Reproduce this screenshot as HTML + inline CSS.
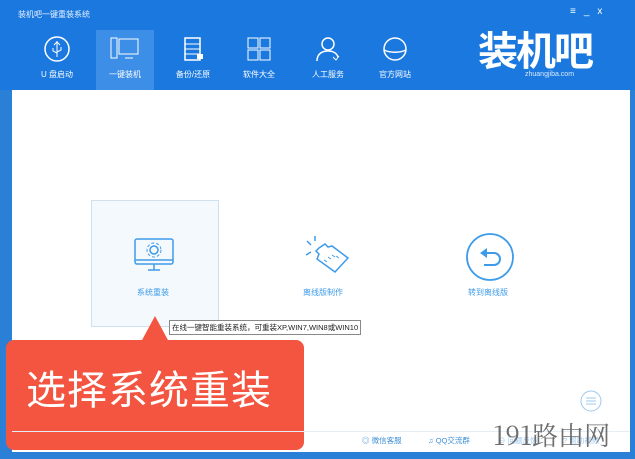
<!DOCTYPE html><html><head><meta charset="utf-8"><style>
*{margin:0;padding:0;box-sizing:border-box}
body{width:635px;height:459px;overflow:hidden;background:#2a7fd6;font-family:"Liberation Sans","Noto Sans CJK SC",sans-serif;position:relative}
.hdr{position:absolute;left:0;top:0;width:635px;height:90px;background:#1a78df}
.t{position:absolute;left:18px;top:9px;color:#e8f2ff;font-size:8px}
.win{position:absolute;left:12px;top:90px;width:618px;height:362px;background:#fff}
.nav{position:absolute;top:30px;width:58px;height:60px;text-align:center;color:#fff;font-size:8px}
.nav.sel{background:#3c8ee6}
.nav svg{display:block;margin:5px auto 6px}
.logo{position:absolute;left:478px;top:24px;color:#fff;font-size:40px;font-weight:bold;letter-spacing:-2px;font-family:"Noto Sans CJK SC",sans-serif;line-height:48px}
.lsub{position:absolute;left:525px;top:71px;color:#d8ebff;font-size:7px}
.box{position:absolute;left:91px;top:200px;width:128px;height:127px;background:#f4f9fd;border:1px solid #cfe0ef}
.lbl{position:absolute;color:#3e9be9;font-size:8px}
.tip{position:absolute;left:169px;top:320px;border:1px solid #888;background:#fff;font-size:7.5px;padding:1px 2px;color:#222;white-space:nowrap}
.call{position:absolute;left:6px;top:340px;width:298px;height:110px;background:#f35540;border-radius:8px;color:#fff;font-size:40px;font-family:"Noto Sans CJK SC",sans-serif;padding:18px 0 0 20px;letter-spacing:1px}
.tri{position:absolute;left:141px;top:316px;width:0;height:0;border-left:14px solid transparent;border-right:14px solid transparent;border-bottom:26px solid #f35540}
.foot{position:absolute;top:435px;font-size:7.5px;color:#3e8fd6}
.wm{position:absolute;left:493px;top:416px;font-size:26px;color:#555;font-family:"Noto Serif CJK SC",serif;opacity:.85}
</style></head><body>
<div class="hdr"></div>
<div class="t">装机吧一键重装系统</div>
<div style="position:absolute;left:570px;top:6px;color:#fff;font-size:10px;letter-spacing:8px">≡_x</div>
<div class="nav" style="left:28px"><svg width="28" height="28" viewBox="0 0 28 28"><circle cx="14" cy="14" r="12" fill="none" stroke="#fff" stroke-width="1.5"/><path d="M14 6v16M11 10l3-3 3 3M10 13v3l4 2M18 12v3l-4 2" stroke="#fff" fill="none"/></svg>U 盘启动</div>
<div class="nav sel" style="left:96px"><svg width="32" height="28" viewBox="0 0 32 28"><rect x="2" y="3" width="6" height="20" fill="none" stroke="#fff"/><rect x="10" y="4" width="19" height="15" fill="none" stroke="#fff"/><path d="M16 23h8" stroke="#fff"/></svg>一键装机</div>
<div class="nav" style="left:164px"><svg width="28" height="28" viewBox="0 0 28 28"><rect x="6" y="3" width="15" height="22" fill="none" stroke="#fff" stroke-width="1.5"/><path d="M6 9h15M6 14h15M6 19h15" stroke="#fff"/><rect x="18" y="19" width="6" height="5" fill="#fff"/></svg>备份/还原</div>
<div class="nav" style="left:230px"><svg width="28" height="28" viewBox="0 0 28 28"><rect x="3" y="3" width="10" height="10" fill="none" stroke="#fff"/><rect x="15" y="3" width="10" height="10" fill="none" stroke="#fff"/><rect x="3" y="15" width="10" height="10" fill="none" stroke="#fff"/><rect x="15" y="15" width="10" height="10" fill="none" stroke="#fff"/></svg>软件大全</div>
<div class="nav" style="left:299px"><svg width="28" height="28" viewBox="0 0 28 28"><circle cx="14" cy="9" r="6" fill="none" stroke="#fff" stroke-width="1.5"/><path d="M3 26c0-7 5-10 11-10s9 3 10 6" fill="none" stroke="#fff" stroke-width="1.5"/><path d="M19 22l3 3 3-4" stroke="#fff" fill="none"/></svg>人工服务</div>
<div class="nav" style="left:366px"><svg width="28" height="28" viewBox="0 0 28 28"><circle cx="14" cy="14" r="11" fill="none" stroke="#fff" stroke-width="1.5"/><path d="M3 15c6 3 16 3 22 0" stroke="#fff" fill="none" stroke-width="1.5"/></svg>官方网站</div>
<div class="logo">装机吧</div>
<div class="lsub">zhuangjiba.com</div>
<div class="win"></div>
<div class="box"></div>
<svg style="position:absolute;left:133px;top:237px" width="42" height="38" viewBox="0 0 42 38"><rect x="2" y="2" width="38" height="25" rx="2" fill="none" stroke="#3e9be9" stroke-width="1.5"/><path d="M2 23h38M15 33h12M21 27v6" stroke="#3e9be9" stroke-width="1.5"/><circle cx="21" cy="13" r="4" fill="none" stroke="#3e9be9" stroke-width="1.5"/><circle cx="21" cy="13" r="7" fill="none" stroke="#3e9be9" stroke-dasharray="3 2"/></svg>
<div class="lbl" style="left:137px;top:287px">系统重装</div>
<svg style="position:absolute;left:302px;top:234px" width="50" height="42" viewBox="0 0 50 42"><path d="M5 7l4 4M13 2v5M4 21l5-3" stroke="#3e9be9" stroke-width="1.5"/><path d="M17 14l6-4 3 3 4-1 16 12-13 14-18-13 2-5-3-3z" fill="none" stroke="#3e9be9" stroke-width="1.5"/><path d="M22 26l3 2M26 23l3 2M30 21l3 2M34 22l3 2" stroke="#3e9be9"/></svg>
<div class="lbl" style="left:303px;top:287px">离线版制作</div>
<svg style="position:absolute;left:465px;top:232px" width="50" height="50" viewBox="0 0 50 50"><circle cx="25" cy="25" r="23" fill="none" stroke="#3e9be9" stroke-width="1.8"/><path d="M17 21h12a6 6 0 0 1 0 12h-10" fill="none" stroke="#3e9be9" stroke-width="2"/><path d="M15 21l7-5v10z" fill="#3e9be9"/></svg>
<div class="lbl" style="left:468px;top:287px">转到离线版</div>
<div class="tip">在线一键智能重装系统，可重装XP,WIN7,WIN8或WIN10</div>
<div class="tri"></div>
<div class="call">选择系统重装</div>
<svg style="position:absolute;left:580px;top:390px" width="22" height="22"><circle cx="11" cy="11" r="10" fill="#fff" stroke="#9cc8ef"/><path d="M6 8h10M6 11h10M6 14h10" stroke="#9cc8ef"/></svg>
<div style="position:absolute;left:12px;top:431px;width:618px;height:1px;background:#e5eef6"></div>
<div class="foot" style="left:362px">◎ 微信客服</div>
<div class="foot" style="left:428px">♫ QQ交流群</div>
<div class="foot" style="left:498px;color:#9cc8ef">⊖ 问题反馈</div>
<div class="foot" style="left:563px;color:#9cc8ef">? 帮助视频</div>
<div class="wm">191路由网</div>
</body></html>
